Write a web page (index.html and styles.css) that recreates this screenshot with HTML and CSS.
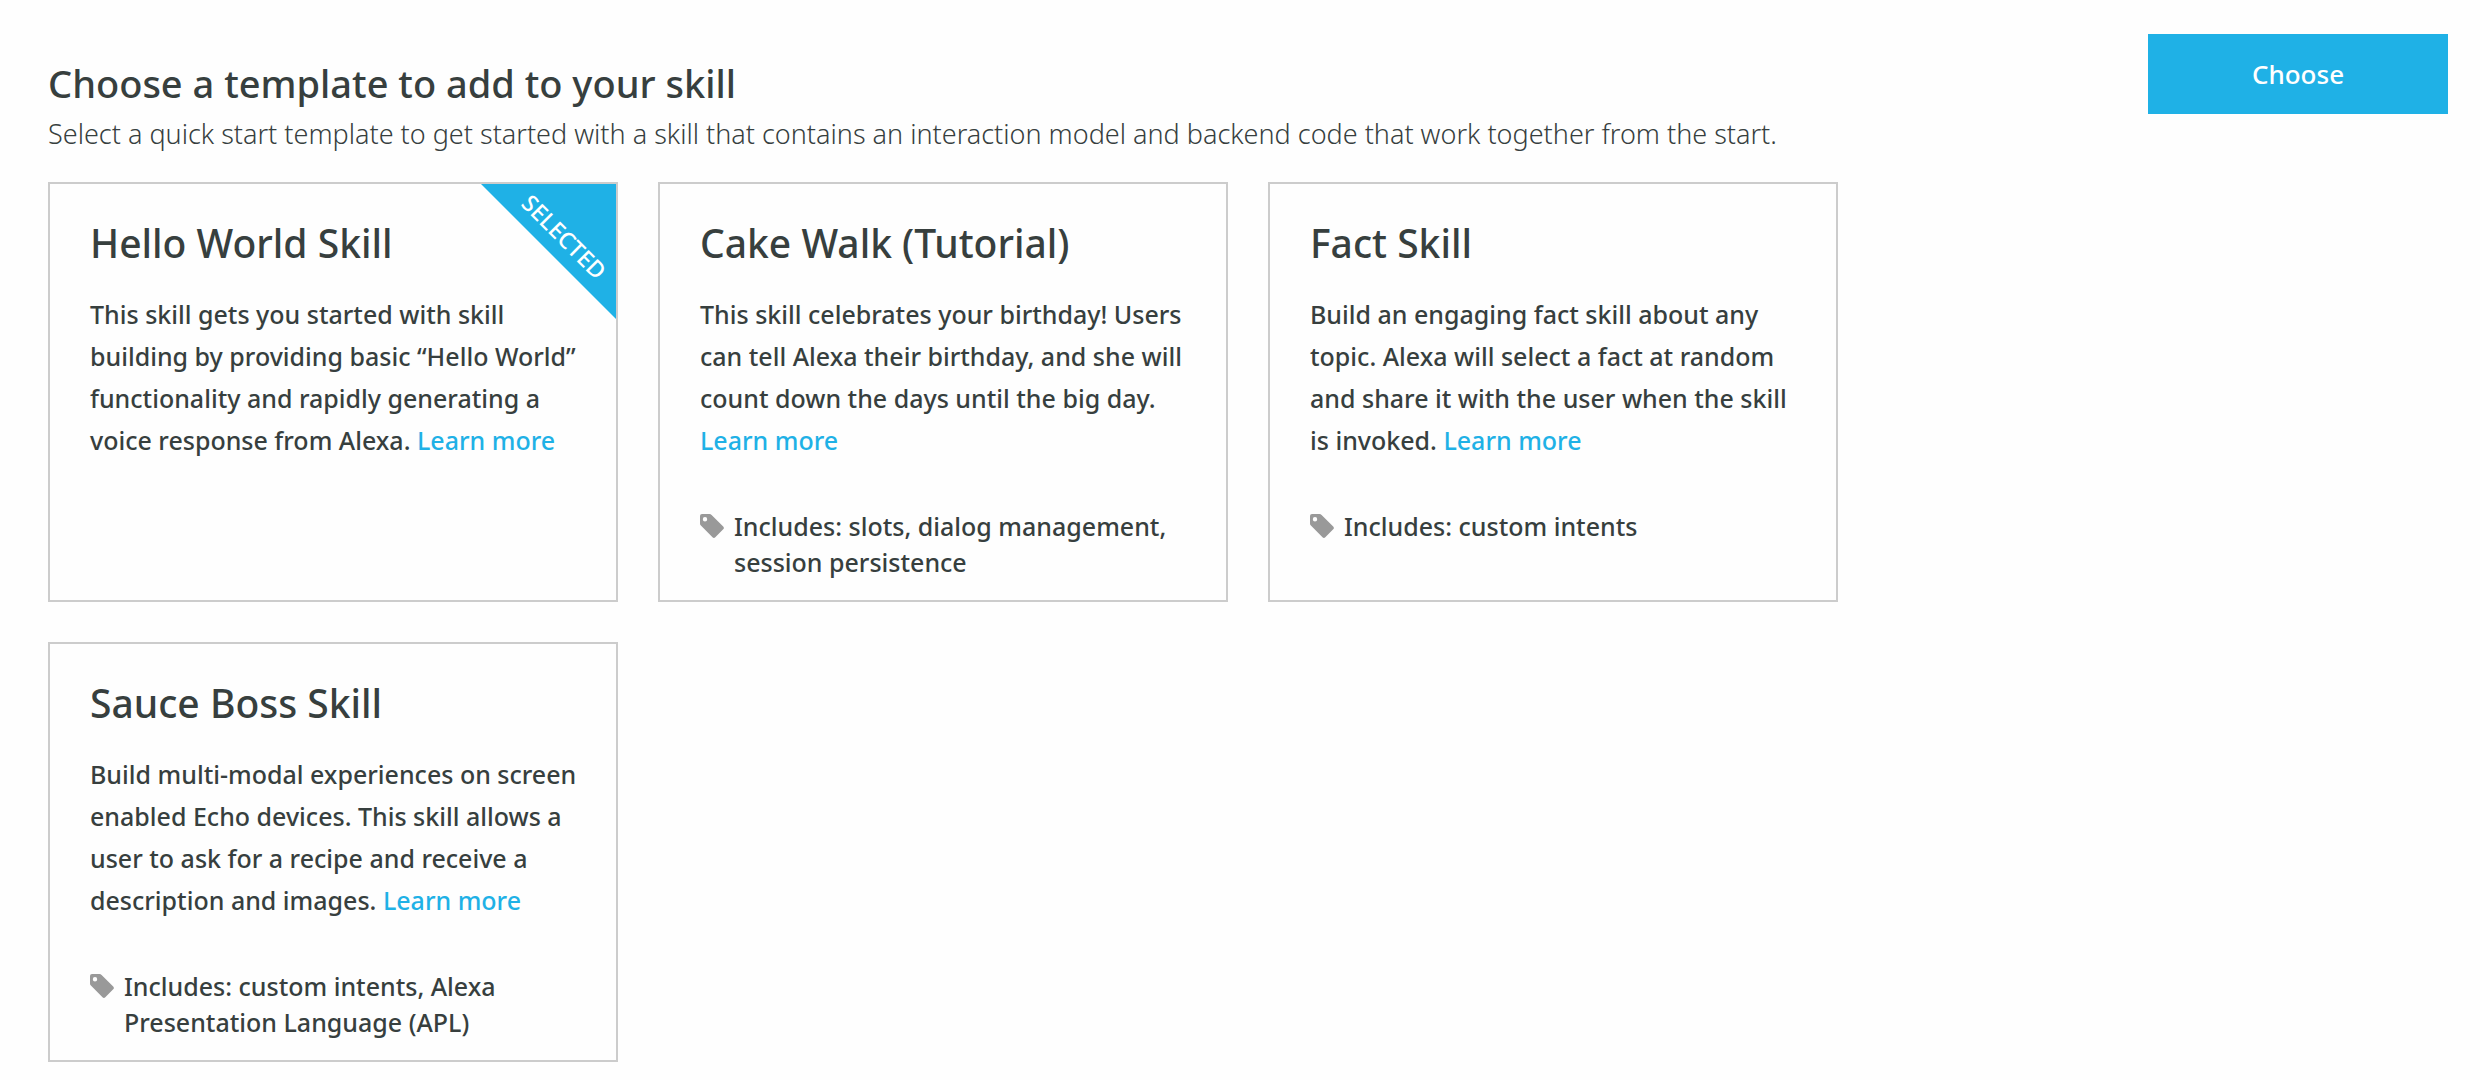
FILE: index.html
```html
<!DOCTYPE html>
<html lang="en">
<head>
<meta charset="utf-8">
<meta name="viewport" content="width=device-width, initial-scale=1">
<title>Choose a template</title>
<link rel="stylesheet" href="styles.css">
</head>
<body>
<svg class="sprite" aria-hidden="true">
  <symbol id="tag" viewBox="0 0 24 24">
    <path fill-rule="evenodd" d="M2 0h7.500a3 3 0 0 1 2.100.9l11.600 11.600a2 2 0 0 1 0 2.800l-7.900 7.900a2 2 0 0 1-2.800 0L.9 11.600A3 3 0 0 1 0 9.500V2a2 2 0 0 1 2-2zM5 3a2.200 2.200 0 1 0 0 4.400A2.200 2.200 0 0 0 5 3z"/>
  </symbol>
</svg>
<main class="page">
  <section class="content">
    <h1 class="heading">Choose a template to add to your skill</h1>
    <p class="intro">Select a quick start template to get started with a skill that contains an interaction model and backend code that work together from the start.</p>
    <div class="templates">
      <article class="card">
        <div class="ribbon"><span class="ribbon-text">SELECTED</span></div>
        <h2 class="card-title">Hello World Skill</h2>
        <p class="card-text">This skill gets you started with skill building by providing basic “Hello World” functionality and rapidly generating a voice response from Alexa. <a class="link" href="#hello-world">Learn more</a></p>
      </article>
      <article class="card">
        <h2 class="card-title">Cake Walk (Tutorial)</h2>
        <p class="card-text">This skill celebrates your birthday! Users can tell Alexa their birthday, and she will count down the days until the big day. <a class="link" href="#cake-walk">Learn more</a></p>
        <div class="includes"><svg class="tag-icon" aria-hidden="true"><use href="#tag"/></svg><p class="includes-text">Includes: slots, dialog management, session persistence</p></div>
      </article>
      <article class="card">
        <h2 class="card-title">Fact Skill</h2>
        <p class="card-text">Build an engaging fact skill about any topic. Alexa will select a fact at random and share it with the user when the skill is invoked. <a class="link" href="#fact">Learn more</a></p>
        <div class="includes"><svg class="tag-icon" aria-hidden="true"><use href="#tag"/></svg><p class="includes-text">Includes: custom intents</p></div>
      </article>
      <article class="card">
        <h2 class="card-title">Sauce Boss Skill</h2>
        <p class="card-text">Build multi-modal experiences on screen enabled Echo devices. This skill allows a user to ask for a recipe and receive a description and images. <a class="link" href="#sauce-boss">Learn more</a></p>
        <div class="includes"><svg class="tag-icon" aria-hidden="true"><use href="#tag"/></svg><p class="includes-text">Includes: custom intents, Alexa Presentation Language (APL)</p></div>
      </article>
    </div>
  </section>
  <button class="choose" type="button">Choose</button>
</main>
</body>
</html>
```
FILE: styles.css
```css
* {
  box-sizing: border-box;
}

body,
h1,
h2,
p {
  margin: 0;
}

body {
  background: #fefefe;
  color: #373f3e;
  font-family: "Noto Sans", "Open Sans", sans-serif;
  font-size: 25px;
  font-weight: 500;
}

.sprite {
  display: none;
}

.page {
  display: flex;
  align-items: flex-start;
  padding: 34px 32px 18px 48px;
}

.content {
  flex: 1;
  min-width: 0;
  padding-top: 23px;
}

.heading {
  font-size: 38px;
  font-weight: 500;
  line-height: 52px;
}

.intro {
  margin-top: 7px;
  font-size: 27px;
  font-weight: 300;
  line-height: 36px;
}

.templates {
  display: grid;
  grid-template-columns: repeat(auto-fill, 570px);
  gap: 40px;
  margin-top: 30px;
}

.card {
  position: relative;
  padding: 32px 32px 20px 40px;
  border: 2px solid #ccc;
}

.card-title {
  font-size: 39px;
  font-weight: 500;
  line-height: 54px;
}

.card-text {
  margin-top: 23px;
  line-height: 42px;
}

.link {
  color: #1fb1e6;
  text-decoration: none;
}

.includes {
  display: flex;
  gap: 10px;
  min-height: 72px;
  margin-top: 47px;
}

.tag-icon {
  flex: none;
  width: 24px;
  height: 24px;
  margin-top: 6px;
  fill: #999;
}

.includes-text {
  line-height: 36px;
}

.ribbon {
  position: absolute;
  top: 0;
  right: 0;
  display: grid;
  place-items: center;
  width: 135px;
  height: 135px;
  background: #1fb1e6;
  clip-path: polygon(0 0, 100% 0, 100% 100%);
}

.ribbon-text {
  color: #fff;
  font-size: 23px;
  font-weight: 500;
  line-height: 30px;
  transform: rotate(45deg) translateY(-22px);
}

.choose {
  flex: none;
  width: 300px;
  height: 80px;
  border: 0;
  background: #1fb1e6;
  color: #fff;
  font: inherit;
  font-size: 26px;
  cursor: pointer;
}
```
